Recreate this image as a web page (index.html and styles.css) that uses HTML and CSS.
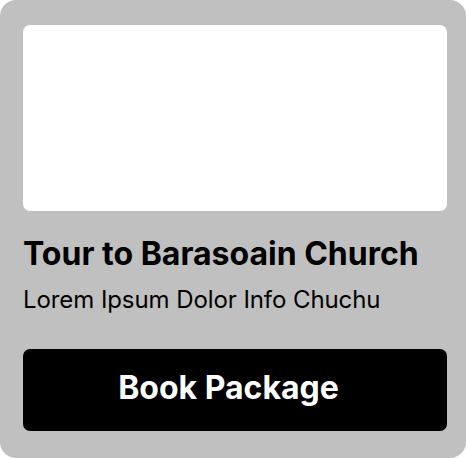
FILE: index.html
```html
<!DOCTYPE html>
<html>
<head>
<meta charset="utf-8">
<link rel="stylesheet" href="styles.css">
</head>
<body>
<div class="card">
  <div class="image"></div>
  <h2 class="title">Tour to Barasoain Church</h2>
  <p class="desc">Lorem Ipsum Dolor Info Chuchu</p>
  <button class="book">Book Package</button>
</div>
</body>
</html>
```
FILE: styles.css
```css
html, body {
  margin: 0;
  padding: 0;
}
body {
  font-family: Inter, "Noto Sans", sans-serif;
}
.card {
  width: 466px;
  height: 458px;
  box-sizing: border-box;
  background: #c0c0c0;
  border-radius: 16px;
  padding: 25px 19px 27px 23px;
  display: flex;
  flex-direction: column;
}
.image {
  width: 424px;
  height: 186px;
  background: #ffffff;
  border-radius: 7px;
  flex-shrink: 0;
}
.title {
  margin: 23px 0 0 0;
  font-size: 32px;
  line-height: 39px;
  font-weight: 700;
  color: #000;
  white-space: nowrap;
}
.desc {
  margin: 12px 0 0 0;
  font-size: 24px;
  line-height: 29px;
  font-weight: 400;
  letter-spacing: -0.08px;
  color: #000;
  white-space: nowrap;
}
.book {
  margin-top: 35px;
  width: 424px;
  height: 82px;
  box-sizing: border-box;
  padding: 19px 13px 24px 0;
  border: none;
  border-radius: 7px;
  background: #000;
  color: #fff;
  font-family: Inter, "Noto Sans", sans-serif;
  font-size: 32px;
  line-height: 39px;
  font-weight: 700;
  text-align: center;
  flex-shrink: 0;
}
```
